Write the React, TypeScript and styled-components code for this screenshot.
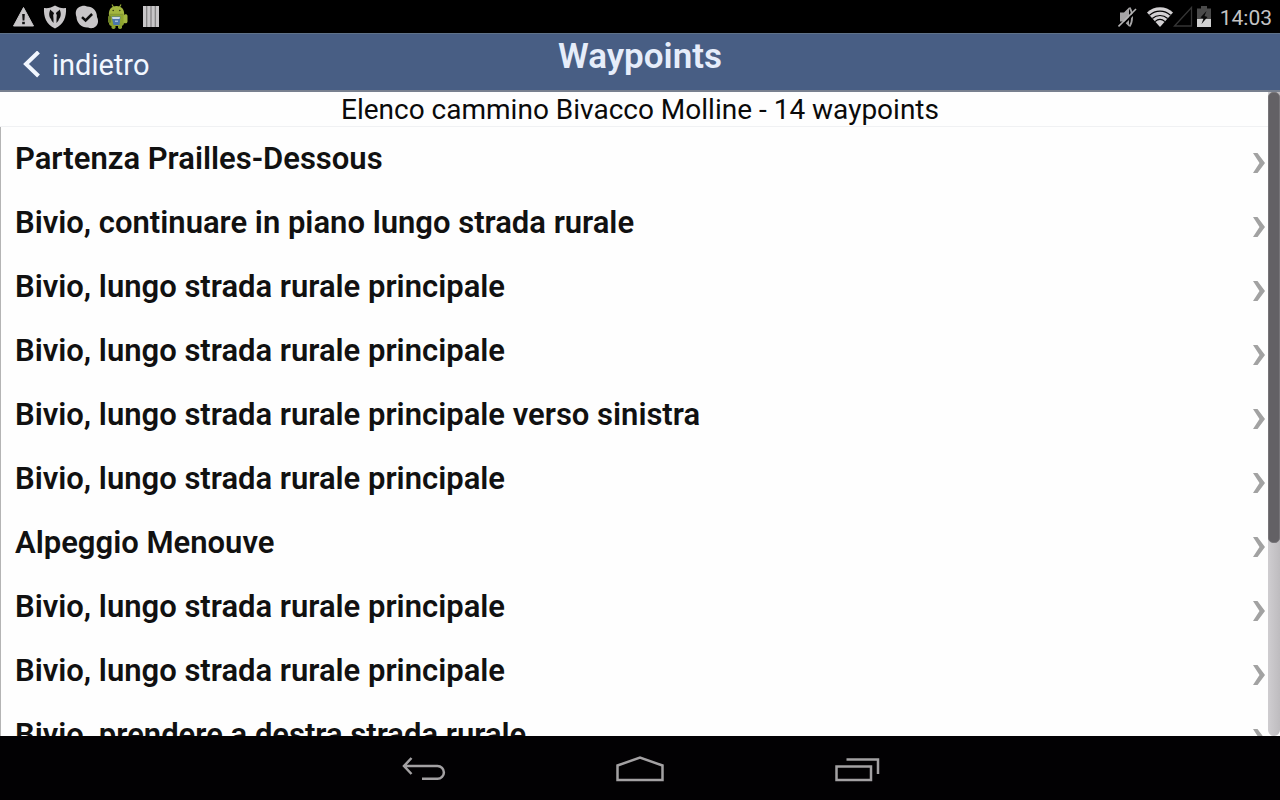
import React from "react";
import styled, { createGlobalStyle } from "styled-components";

const GlobalStyle = createGlobalStyle`
  *, *::before, *::after { box-sizing: border-box; }
  html, body, #root { height: 100%; }
  body { margin: 0; background: #000; font-family: Roboto, "Liberation Sans", sans-serif; }
`;

const Screen = styled.div`
  display: flex;
  flex-direction: column;
  height: 100%;
  overflow: hidden;
`;

const StatusBar = styled.div`
  flex: none;
  display: flex;
  align-items: center;
  justify-content: space-between;
  height: 33px;
  padding: 0 8px 0 12px;
  background: #000;
  color: #c4c4c4;
`;

const StatusGroup = styled.div<{ $gap: number }>`
  display: flex;
  align-items: center;
  gap: ${(p) => p.$gap}px;
  svg { display: block; }
`;

const Clock = styled.time`
  margin-left: 9px;
  font-size: 21px;
  line-height: 32px;
  padding-top: 2px;
`;

const Header = styled.header`
  flex: none;
  display: grid;
  grid-template-columns: 1fr auto 1fr;
  align-items: start;
  height: 59px;
  background: #485e84;
  border-top: 1px solid #5f7289;
  border-bottom: 2px solid #78808f;
`;

const BackButton = styled.button`
  justify-self: start;
  display: flex;
  align-items: center;
  gap: 11px;
  height: 56px;
  margin: 0;
  padding: 6px 12px 0 22px;
  border: 0;
  background: none;
  color: #f2f7ff;
  font: 400 29px/40px Roboto, "Liberation Sans", sans-serif;
  cursor: pointer;
`;

const Title = styled.h1`
  margin: 0;
  padding-top: 2px;
  color: #e6edfa;
  font-size: 35px;
  font-weight: 600;
  line-height: 42px;
`;

const Content = styled.main`
  position: relative;
  flex: 1;
  min-height: 0;
  overflow: hidden;
  background: #fefefe;
`;

const Caption = styled.p`
  margin: 0;
  height: 35px;
  border-bottom: 1px solid #f0f1f3;
  color: #0a0a0a;
  font-size: 28px;
  line-height: 35px;
  text-align: center;
`;

const List = styled.ul`
  margin: 0;
  padding: 0;
  list-style: none;
  border-left: 1px solid #b4b4b4;
`;

const Row = styled.a`
  display: flex;
  align-items: center;
  justify-content: space-between;
  height: 64px;
  padding: 0 15px 0 14px;
  color: #111;
  font-size: 31px;
  font-weight: 600;
  line-height: 64px;
  text-decoration: none;
  svg { display: block; flex: none; margin-top: 8px; }
`;

const ScrollTrack = styled.div`
  position: absolute;
  top: 0;
  right: 0;
  bottom: 0;
  width: 12px;
  border-radius: 0 0 6px 6px;
  background: linear-gradient(to right, #cfcdd0, #bebcbf);
`;

const ScrollThumb = styled.div`
  height: 70%;
  border-radius: 5px;
  border: 1px solid #777579;
  background: #636165;
`;

const NavBar = styled.nav`
  flex: none;
  display: flex;
  justify-content: center;
  align-items: center;
  gap: 137px;
  height: 64px;
  background: #020103;
`;

const NavButton = styled.button`
  width: 80px;
  height: 64px;
  padding: 2px 0 0;
  border: 0;
  background: none;
  color: #a3a1a3;
  cursor: pointer;
  svg { display: block; margin: 0 auto; }
`;

const WarningIcon = () => (
  <svg width="23" height="22" viewBox="0 0 23 22" aria-hidden="true">
    <path d="M11.5 1.500 21.500 20H1.500z" fill="#c8c6c8" stroke="#c8c6c8" strokeLinejoin="round" />
    <path d="M10.200 8h2.600l-.400 6.500h-1.800z" fill="#111" />
    <rect x="10.200" y="15.800" width="2.600" height="2.400" fill="#111" />
  </svg>
);

const ShieldIcon = () => (
  <svg width="24" height="24" viewBox="0 0 24 24" aria-hidden="true">
    <path d="M1 3C5 3.500 9 2.500 12 .500 15 2.500 19 3.500 23 3 23.500 12 21 19 12 23.500 3 19 .500 12 1 3Z" fill="#c8c6c8" />
    <path d="M7.500 4.500C5.500 8 6 12 8 14l.500 1.500L10.500 18V14L10.200 10 11 8.500C10.500 6.500 9 7 7.500 4.500Z" fill="#0c0c0c" />
    <path d="M16.500 4.500C18.500 8 18 12 16 14l-.500 1.500L13.500 18V14L13.800 10 13 8.500C13.500 6.500 15 7 16.500 4.500Z" fill="#0c0c0c" />
  </svg>
);

const CheckBadgeIcon = () => (
  <svg width="24" height="24" viewBox="0 0 24 24" aria-hidden="true">
    <path d="M7 1c2-.600 4 0 5 .500C18 1.500 22 6 22 12c2 4 1 8-2 10-2 1.500-5 1.500-7 .500C7 23 1.500 18 1.500 12-.500 7 1.500 2 7 1Z" fill="#c8c6c8" />
    <path d="m7 12.200 3.600 3.300 6.500-6.500" fill="none" stroke="#0c0c0c" strokeWidth="2.500" />
  </svg>
);

const RobotIcon = () => (
  <svg width="22" height="26" viewBox="0 0 22 26" aria-hidden="true">
    <path d="M5 .500 7 4M14 .500l-2 3.500" stroke="#93a935" strokeWidth="1.200" />
    <path d="M2 12C1 5.500 4.500 2 9.500 2S18 5.500 17 12Z" fill="#a3b640" />
    <path d="M2 11h15v8c0 2-1.500 3-3 3H5c-2 0-3-1-3-3Z" fill="#8fa530" />
    <rect x="1" y="11.500" width="3" height="7.500" rx="1.500" fill="#6c8127" />
    <path d="M16.500 12c.500-2.500 4-2.500 4 0v5.500c0 2-3 2.500-4 1Z" fill="#a3b640" />
    <rect x="4.500" y="19" width="4" height="6" rx="1.800" fill="#8ba130" />
    <rect x="11" y="19" width="4" height="6" rx="1.800" fill="#8ba130" />
    <circle cx="6.200" cy="6.500" r=".8" fill="#343d12" />
    <circle cx="12.800" cy="6.500" r=".8" fill="#343d12" />
    <path d="M2.500 10.300h14" stroke="#7f9433" strokeWidth="1" />
    <path d="M4.500 12.500h9l-1 8.500h-6Z" fill="#4b77ad" />
    <path d="M5 13h8l-.500 2h-7Z" fill="#c9d8e6" />
    <path d="M8 16.500h3V18H8Z" fill="#9fbbd6" />
  </svg>
);

const BarsIcon = () => (
  <svg width="22" height="21" viewBox="-6 0 22 21" fill="#c8c6c8" aria-hidden="true">
    <rect x="0" y="0" width="16" height="21" fill="#5a5a5a" />
    <rect x="0" y="0" width="3.400" height="21" />
    <rect x="4.200" y="0" width="3.400" height="21" />
    <rect x="8.400" y="0" width="3.400" height="21" />
    <rect x="12.600" y="0" width="3.400" height="21" />
  </svg>
);

const MutedIcon = () => (
  <svg width="19" height="22" viewBox="0 0 19 22" aria-hidden="true">
    <path d="M2 6.500h4l5-5v19l-5-5H2Z" fill="#a5a4a5" />
    <path d="M11.500 1.500c3.500 5 3.500 14 0 19" fill="none" stroke="#a5a4a5" strokeWidth="1.800" />
    <path d="M2 21.500 19.500 4" stroke="#000" strokeWidth="2" />
    <path d="M.500 20.500 18 3" stroke="#b5b4b5" strokeWidth="1.600" />
  </svg>
);

const WifiIcon = () => (
  <svg width="26" height="20" viewBox="0 0 26 20" aria-hidden="true">
    <path d="M0 5.500C7-1.500 19-1.500 26 5.500L13 20Z" fill="#d2d0d2" />
    <path d="M2.500 8.300c6-5.600 15-5.600 21 0M5.300 11.500c4.500-4 10.900-4 15.400 0M8 14.600c3-2.600 7-2.600 10 0" fill="none" stroke="#000" strokeWidth="1.200" />
  </svg>
);

const SignalIcon = () => (
  <svg width="20" height="21" viewBox="0 0 20 21" aria-hidden="true">
    <path d="M1.500 20 18.500 1.500V20Z" fill="none" stroke="#353535" strokeWidth="1.300" />
  </svg>
);

const BatteryIcon = () => (
  <svg width="18" height="21" viewBox="-4 0 18 21" aria-hidden="true">
    <path d="M0 2.500h4V0h6v2.500h4V13H0Z" fill="#4a4a4a" />
    <path d="M0 13h14v8H0Z" fill="#d0d0d0" />
    <path d="M9.500 5 3.500 11.500l3 1L4.500 18l6-7-3-1Z" fill="#0a0a0a" />
  </svg>
);

const BackChevron = () => (
  <svg width="19" height="28" viewBox="0 0 19 28" aria-hidden="true">
    <path d="M16.500 1 4 13l12.500 12" fill="none" stroke="#f2f7ff" strokeWidth="4" />
  </svg>
);

const RowChevron = () => (
  <svg width="12" height="22" viewBox="0 0 12 22" aria-hidden="true">
    <path d="M0 1h4.500L12 11 4.500 21H0L6.500 11Z" fill="#a2a2a2" />
  </svg>
);

const waypoints = [
  "Partenza Prailles-Dessous",
  "Bivio, continuare in piano lungo strada rurale",
  "Bivio, lungo strada rurale principale",
  "Bivio, lungo strada rurale principale",
  "Bivio, lungo strada rurale principale verso sinistra",
  "Bivio, lungo strada rurale principale",
  "Alpeggio Menouve",
  "Bivio, lungo strada rurale principale",
  "Bivio, lungo strada rurale principale",
  "Bivio, prendere a destra strada rurale",
];

export default function App() {
  return (
    <Screen>
      <GlobalStyle />
      <StatusBar>
        <StatusGroup $gap={8}>
          <WarningIcon />
          <ShieldIcon />
          <CheckBadgeIcon />
          <RobotIcon />
          <BarsIcon />
        </StatusGroup>
        <StatusGroup $gap={0}>
          <StatusGroup $gap={10}>
            <MutedIcon />
            <WifiIcon />
          </StatusGroup>
          <SignalIcon />
          <BatteryIcon />
          <Clock>14:03</Clock>
        </StatusGroup>
      </StatusBar>
      <Header>
        <BackButton type="button">
          <BackChevron />
          indietro
        </BackButton>
        <Title>Waypoints</Title>
      </Header>
      <Content>
        <Caption>Elenco cammino Bivacco Molline - 14 waypoints</Caption>
        <List>
          {waypoints.map((name, index) => (
            <li key={index}>
              <Row href={`#waypoint-${index + 1}`}>
                {name}
                <RowChevron />
              </Row>
            </li>
          ))}
        </List>
        <ScrollTrack>
          <ScrollThumb />
        </ScrollTrack>
      </Content>
      <NavBar>
        <NavButton type="button" aria-label="Indietro">
          <svg width="46" height="26" viewBox="-2 0 46 26" fill="none" stroke="currentColor" strokeWidth="2.500" aria-hidden="true">
            <path d="M9.500 2 2 10l7.500 8M2 10h33.500a6.400 6.400 0 0 1 0 12.800H20" />
          </svg>
        </NavButton>
        <NavButton type="button" aria-label="Home">
          <svg width="48" height="26" viewBox="0 0 48 26" fill="none" stroke="currentColor" strokeWidth="2.500" aria-hidden="true">
            <path d="M1.500 9.500 24 1.500l22.500 8V24h-45Z" />
          </svg>
        </NavButton>
        <NavButton type="button" aria-label="App recenti">
          <svg width="46" height="26" viewBox="0 0 46 26" fill="none" stroke="currentColor" strokeWidth="2.500" aria-hidden="true">
            <path d="M2.500 10.500H37V24H2.500ZM12.500 3.500h31.500V18" />
          </svg>
        </NavButton>
      </NavBar>
    </Screen>
  );
}
